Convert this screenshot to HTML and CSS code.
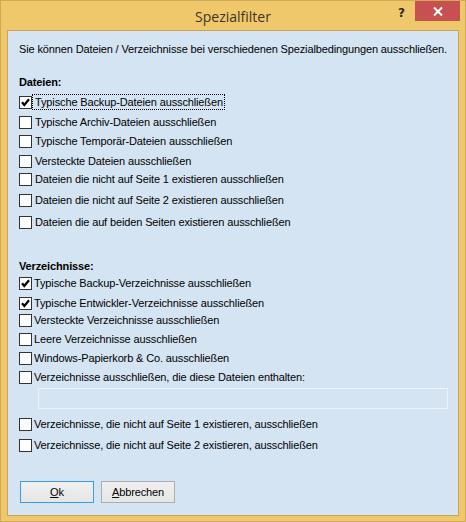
FILE: index.html
```html
<!DOCTYPE html>
<html lang="de">
<head>
<meta charset="utf-8">
<title>Spezialfilter</title>
<link rel="stylesheet" href="styles.css">
</head>
<body>
<div class="window">
  <div class="titlebar">
    <div></div>
    <div class="title">Spezialfilter</div>
    <div class="controls">
      <span class="help">?</span>
      <span class="close"><svg width="10" height="9" viewBox="0 0 10 9"><path d="M1 0.5 L9 8.5 M9 0.5 L1 8.5" stroke="#fff" stroke-width="2"/></svg></span>
    </div>
  </div>
  <div class="client">
    <div class="intro">Sie können Dateien / Verzeichnisse bei verschiedenen Spezialbedingungen ausschließen.</div>
    <div class="head mt19">Dateien:</div>
    <div class="row mt5"><span class="cb checked"><svg width="11" height="11" viewBox="0 0 11 11"><path d="M2 5.3 L4.3 8 L9 2.3" fill="none" stroke="#000" stroke-width="2.2"/></svg></span><span class="lbl focus">Typische Backup-Dateien ausschließen</span></div>
    <div class="row mt4"><span class="cb"></span><span class="lbl">Typische Archiv-Dateien ausschließen</span></div>
    <div class="row mt3"><span class="cb"></span><span class="lbl">Typische Temporär-Dateien ausschließen</span></div>
    <div class="row mt4"><span class="cb"></span><span class="lbl">Versteckte Dateien ausschließen</span></div>
    <div class="row mt2"><span class="cb"></span><span class="lbl">Dateien die nicht auf Seite 1 existieren ausschließen</span></div>
    <div class="row mt5"><span class="cb"></span><span class="lbl">Dateien die nicht auf Seite 2 existieren ausschließen</span></div>
    <div class="row mt6"><span class="cb"></span><span class="lbl">Dateien die auf beiden Seiten existieren ausschließen</span></div>
    <div class="head mt29">Verzeichnisse:</div>
    <div class="row mt2"><span class="cb checked"><svg width="11" height="11" viewBox="0 0 11 11"><path d="M2 5.3 L4.3 8 L9 2.3" fill="none" stroke="#000" stroke-width="2.2"/></svg></span><span class="lbl tight">Typische Backup-Verzeichnisse ausschließen</span></div>
    <div class="row mt4"><span class="cb checked"><svg width="11" height="11" viewBox="0 0 11 11"><path d="M2 5.3 L4.3 8 L9 2.3" fill="none" stroke="#000" stroke-width="2.2"/></svg></span><span class="lbl tight">Typische Entwickler-Verzeichnisse ausschließen</span></div>
    <div class="row mt1"><span class="cb"></span><span class="lbl tight">Versteckte Verzeichnisse ausschließen</span></div>
    <div class="row mt3"><span class="cb"></span><span class="lbl tight">Leere Verzeichnisse ausschließen</span></div>
    <div class="row mt3"><span class="cb"></span><span class="lbl tight">Windows-Papierkorb &amp; Co. ausschließen</span></div>
    <div class="row mt3"><span class="cb"></span><span class="lbl tight">Verzeichnisse ausschließen, die diese Dateien enthalten:</span></div>
    <div class="textbox mt3"></div>
    <div class="row mt7"><span class="cb"></span><span class="lbl tight">Verzeichnisse, die nicht auf Seite 1 existieren, ausschließen</span></div>
    <div class="row mt5"><span class="cb"></span><span class="lbl tight">Verzeichnisse, die nicht auf Seite 2 existieren, ausschließen</span></div>
    <div class="buttons mt28">
      <span class="btn default"><u>O</u>k</span>
      <span class="btn"><u>A</u>bbrechen</span>
    </div>
  </div>
</div>
</body>
</html>
```
FILE: styles.css
```css
* { box-sizing: border-box; }
html, body { margin: 0; padding: 0; }
body {
  width: 466px;
  height: 522px;
  background: #f0c86c;
  font-family: "Liberation Sans", Arial, sans-serif;
  font-size: 11px;
  letter-spacing: -0.13px;
  color: #000;
}
.window {
  width: 466px;
  height: 522px;
  border: 1px solid #d2aa55;
  background: #f0c86c;
  display: flex;
  flex-direction: column;
}
.titlebar {
  height: 29px;
  display: grid;
  grid-template-columns: 1fr auto 1fr;
}
.title {
  align-self: center;
  font-family: "Open Sans", "Noto Sans", sans-serif;
  font-size: 14px;
  letter-spacing: 0;
  color: #3c3526;
  padding-top: 1px;
}
.controls {
  display: flex;
  justify-content: flex-end;
  align-items: flex-start;
  padding-right: 5px;
}
.help {
  font-family: "DejaVu Sans", sans-serif;
  font-weight: bold;
  font-size: 12px;
  letter-spacing: 0;
  color: #2b2b2b;
  margin-top: 5px;
  margin-right: 10px;
}
.close {
  width: 45px;
  height: 20px;
  background: #c75050;
  display: flex;
  align-items: center;
  justify-content: center;
}
.client {
  flex: 1;
  margin: 0 6px 5px 6px;
  border: 1px solid #c9a458;
  background: #d5e4f2;
  padding: 0 10px 0 11px;
}
.intro {
  margin-top: 11px;
  height: 14px;
  line-height: 14px;
  white-space: nowrap;
}
.head {
  height: 14px;
  line-height: 14px;
  font-weight: bold;
}
.row {
  height: 16px;
  display: flex;
  align-items: center;
  white-space: nowrap;
}
.cb {
  width: 13px;
  height: 13px;
  border: 1px solid #333;
  background: #fff;
  flex: none;
  display: flex;
  align-items: center;
  justify-content: center;
}
.lbl {
  height: 16px;
  line-height: 14px;
  border: 1px solid transparent;
  padding: 0 1px 0 2px;
}
.lbl.tight { padding-left: 1px; }
.lbl.focus { border: 1px dotted #000; }
.textbox {
  margin-left: 19px;
  width: 410px;
  height: 21px;
  border: 1px solid #eef2f7;
  background: #d5e4f2;
}
.buttons {
  display: flex;
  gap: 7px;
  padding-left: 1px;
}
.btn {
  width: 74px;
  height: 22px;
  border: 1px solid #adadad;
  background: linear-gradient(#f0f0f0, #e5e5e5);
  display: flex;
  align-items: center;
  justify-content: center;
}
.btn.default { border-color: #3c9be8; }
.mt1 { margin-top: 1px; }
.mt2 { margin-top: 2px; }
.mt3 { margin-top: 3px; }
.mt4 { margin-top: 4px; }
.mt5 { margin-top: 5px; }
.mt6 { margin-top: 6px; }
.mt7 { margin-top: 7px; }
.mt19 { margin-top: 19px; }
.mt28 { margin-top: 28px; }
.mt29 { margin-top: 29px; }
```
